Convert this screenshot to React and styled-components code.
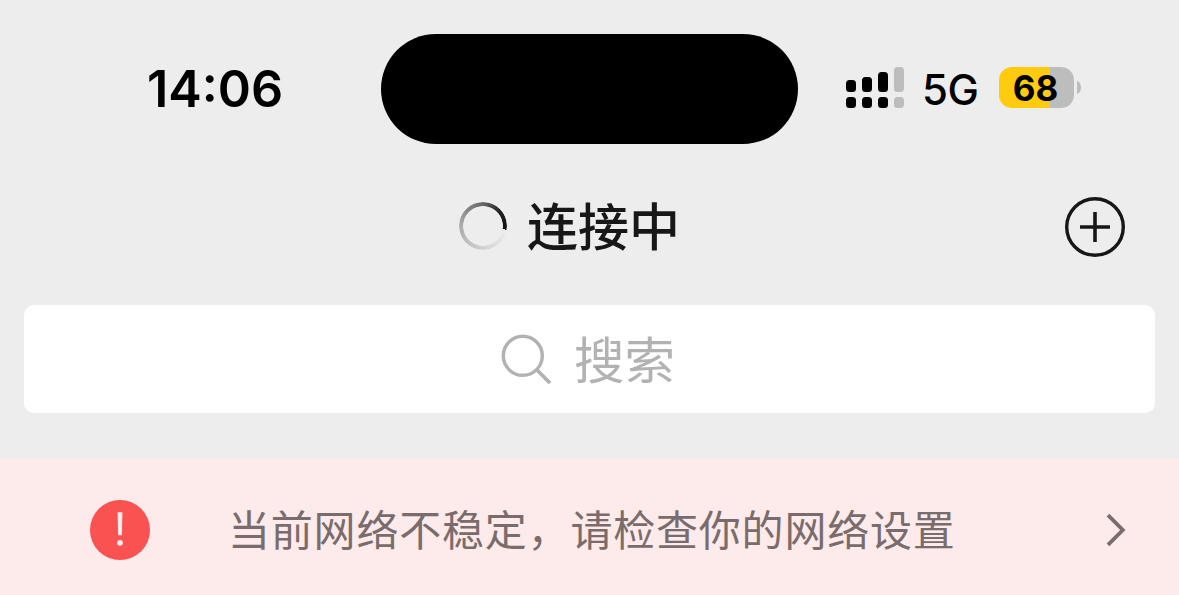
import React from 'react'
import styled, { createGlobalStyle } from 'styled-components'

const signalBars = [
    { height: 12, active: true },
    { height: 15, active: true },
    { height: 20, active: true },
    { height: 25, active: false },
]

export default function App() {
    return (
        <Screen>
            <GlobalStyle />
            <StatusBar>
                <Time>14:06</Time>
                <Island />
                <StatusIcons>
                    <Signal>
                        {signalBars.map(({ height, active }) => (
                            <SignalColumn key={height}>
                                <SignalMark $height={height} $active={active} />
                                <SignalMark $height={11} $active={active} />
                            </SignalColumn>
                        ))}
                    </Signal>
                    <Network>5G</Network>
                    <Battery>
                        <BatteryBody $level={68}>68</BatteryBody>
                        <BatteryTip />
                    </Battery>
                </StatusIcons>
            </StatusBar>

            <Header>
                <Spinner />
                <Title>连接中</Title>
                <AddButton aria-label="添加">
                    <svg width="60" height="60" viewBox="0 0 60 60" fill="none" stroke="#171717">
                        <circle cx="30" cy="30" r="28.3" strokeWidth="3.4" />
                        <path d="M30 15v30M15 30h30" strokeWidth="3.6" />
                    </svg>
                </AddButton>
            </Header>

            <SearchBox>
                <svg width="52" height="52" viewBox="0 0 52 52" fill="none" stroke="#b2b2b2" strokeWidth="3.4">
                    <circle cx="22.8" cy="22.8" r="19.5" />
                    <path d="M36.5 36.5L50 50" strokeWidth="3.8" />
                </svg>
                <Placeholder>搜索</Placeholder>
            </SearchBox>

            <Banner>
                <svg width="60" height="60" viewBox="0 0 60 60">
                    <circle cx="30" cy="30" r="30" fill="#fa5151" />
                    <path d="M27.6 12.3h4.8l-.5 23h-3.8z" fill="#fdeaea" />
                    <circle cx="30" cy="42.8" r="2.9" fill="#fdeaea" />
                </svg>
                <Message>当前网络不稳定，请检查你的网络设置</Message>
                <svg width="22" height="34" viewBox="0 0 22 34" fill="none" stroke="#7a6c6c" strokeWidth="3.8">
                    <path d="M3 2.2L17.8 17L3 31.8" />
                </svg>
            </Banner>
        </Screen>
    )
}

const GlobalStyle = createGlobalStyle`
    body {
        margin: 0;
        background-color: #ededed;
    }
`

const Screen = styled.div`
    display: flex;
    flex-direction: column;
    width: 1179px;
    height: 595px;
    overflow: hidden;
    background-color: #ededed;
    font-family: Inter, "Noto Sans CJK SC", sans-serif;
`

const StatusBar = styled.div`
    display: grid;
    grid-template-columns: 381px 417px 1fr;
    align-items: center;
    height: 178px;
    color: #000;
`

const Time = styled.div`
    padding-left: 147px;
    font-size: 50.3px;
    font-weight: 600;
    line-height: 60px;
`

const Island = styled.div`
    height: 110px;
    border-radius: 55px;
    background-color: #000;
`

const StatusIcons = styled.div`
    display: flex;
    align-items: center;
    height: 60px;
    padding-left: 48px;
`

const Signal = styled.div`
    display: flex;
    align-items: flex-end;
    gap: 6px;
    height: 41px;
    width: 76px;
    margin-top: -3px;
`

const SignalColumn = styled.div`
    display: flex;
    flex-direction: column;
    gap: 5px;
`

const SignalMark = styled.div`
    width: 10px;
    height: ${({ $height }) => $height}px;
    border-radius: 3.5px;
    background-color: ${({ $active }) => $active ? '#000' : '#bdbdbd'};
`

const Network = styled.div`
    width: 77px;
    padding-top: 2px;
    font-size: 42px;
    font-weight: 500;
    letter-spacing: -0.5px;
    line-height: 50px;
`

const Battery = styled.div`
    display: flex;
    align-items: center;
    gap: 3px;
    margin-top: -3px;
`

const BatteryBody = styled.div`
    width: 75px;
    height: 41px;
    border-radius: 13px;
    background: linear-gradient(to right, #fecb0e ${({ $level }) => $level}%, #bdbdbd ${({ $level }) => $level}%);
    font-size: 35px;
    font-weight: 700;
    line-height: 42px;
    text-align: center;
    text-indent: -2px;
`

const BatteryTip = styled.div`
    width: 4px;
    height: 13px;
    border-radius: 0 4px 4px 0 / 0 6.5px 6.5px 0;
    background-color: #bdbdbd;
`

const Header = styled.div`
    display: flex;
    align-items: center;
    height: 98px;
    padding: 0 54px 0 459px;
`

const Spinner = styled.div`
    width: 48px;
    height: 48px;
    margin-bottom: 2px;
    border-radius: 50%;
    background: conic-gradient(from 99deg, #ededed 0deg, #e0e0e0 40deg, #d0d0d0 85deg, #aaa 175deg, #666 261deg, #222 310deg, #111 360deg);
    mask: radial-gradient(circle, transparent 19.5px, #000 20.2px);
`

const Title = styled.div`
    margin-left: 20px;
    padding-top: 2px;
    color: #171717;
    font-size: 51px;
    font-weight: 500;
    line-height: 74px;
`

const AddButton = styled.button`
    display: flex;
    margin-left: auto;
    padding: 0;
    border: 0;
    background: none;
    cursor: pointer;
`

const SearchBox = styled.div`
    display: flex;
    align-items: center;
    justify-content: center;
    gap: 22px;
    height: 108px;
    margin: 29px 24px 46px;
    padding-right: 4px;
    box-sizing: border-box;
    border-radius: 10px;
    background-color: #fff;
`

const Placeholder = styled.div`
    padding-top: 4px;
    color: #b2b2b2;
    font-size: 50.5px;
    line-height: 72px;
`

const Banner = styled.div`
    display: flex;
    align-items: center;
    height: 136px;
    padding: 6px 52px 0 90px;
    box-sizing: border-box;
    background-color: #fcebea;
`

const Message = styled.div`
    flex: 1;
    margin-left: 78px;
    padding-top: 2px;
    color: #7a6c6c;
    font-size: 42px;
    letter-spacing: 0.8px;
    line-height: 60px;
    white-space: nowrap;
`
